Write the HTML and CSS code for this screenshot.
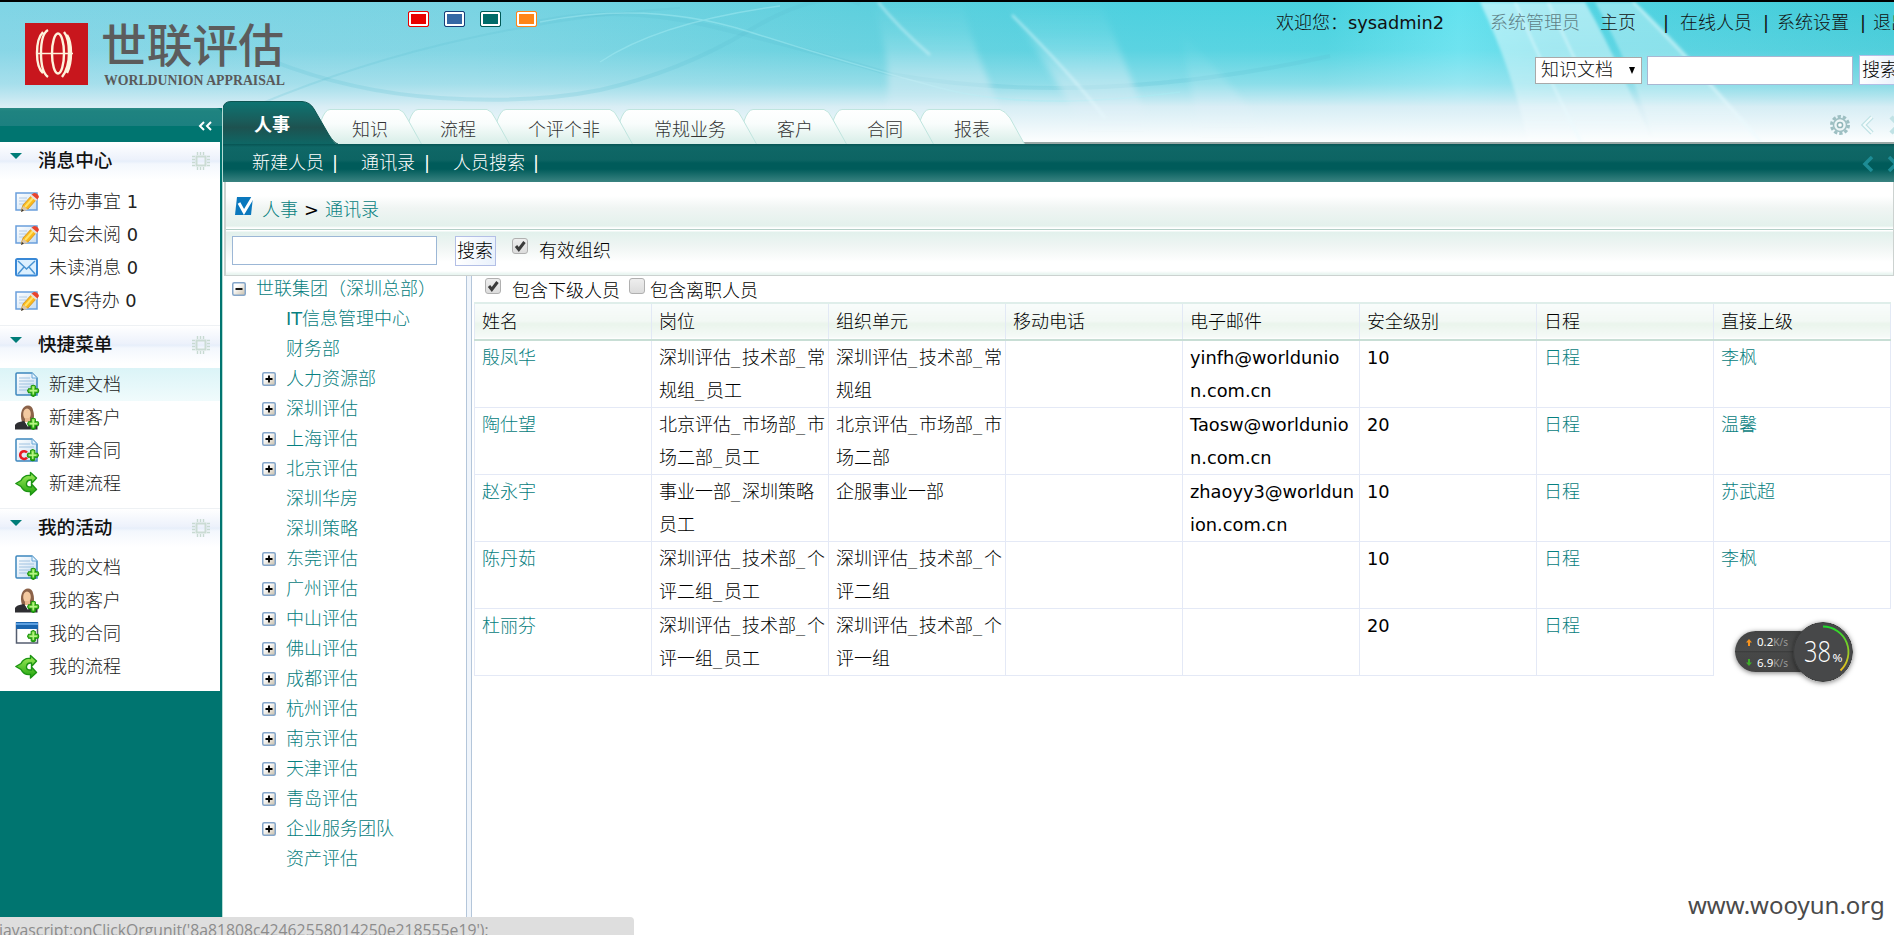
FILE: index.html
```html
<!DOCTYPE html>
<html lang="zh-CN">
<head>
<meta charset="utf-8">
<title>通讯录</title>
<link rel="stylesheet" href="styles.css">
</head>
<body>
<svg class="defs" width="0" height="0" aria-hidden="true">
  <defs>
    <linearGradient id="tabFill" x1="0" y1="0" x2="0" y2="1"><stop offset="0" stop-color="#fff"/><stop offset=".4" stop-color="#f9fdfc"/><stop offset="1" stop-color="#d6ede7"/></linearGradient>
    <linearGradient id="paper" x1="0" y1="0" x2="1" y2="1"><stop offset="0" stop-color="#fff"/><stop offset="1" stop-color="#c4dcf2"/></linearGradient>
    <linearGradient id="green" x1="0" y1="0" x2="0" y2="1"><stop offset="0" stop-color="#a2ee5c"/><stop offset="1" stop-color="#1fa30d"/></linearGradient>
    <linearGradient id="box" x1="0" y1="0" x2="1" y2="1"><stop offset="0.3" stop-color="#fff"/><stop offset="1" stop-color="#c8bda8"/></linearGradient>
    <symbol id="plusBadge" viewBox="0 0 12 12"><path d="M4 1.5 6 .5 8 1.500V4h2.500L11.500 6 10.500 8H8v2.500L6 11.500 4 10.500V8H1.500L.5 6 1.500 4H4z" fill="url(#green)" stroke="#159009"/><path d="M6 2.500v7M2.500 6h7" stroke="#b8f588" stroke-width="1.300"/></symbol>
    <symbol id="i-edit" viewBox="0 0 25 22"><path d="M1 2h21v17H1z" fill="url(#paper)" stroke="#6a9fdc" stroke-width="1.500"/><path d="M4 7h8M4 10h7M4 13h5" stroke="#b4cbe4"/><path d="M6 20 8 14 17 4l5 4-9 10z" fill="#fbb91c" stroke="#c98516" stroke-width=".7"/><path d="M10 16 19 6" stroke="#ffe36b" stroke-width="2"/><path d="m16 4 3-2q4 0 5 4l-2 3z" fill="#e8432c"/><path d="m15 5 6 5 1.500-1.500-6-5z" fill="#e8e2dc"/><path d="m6 21 2-6 5 3.500z" fill="#d9c6ac"/><path d="m6 21 1-3 2 1.500z" fill="#333"/></symbol>
    <symbol id="i-mail" viewBox="0 0 25 22"><rect x="1" y="2" width="21" height="16.500" rx="1.500" fill="#dcf0ff" stroke="#3988d6" stroke-width="2"/><path d="m3 4 8.500 8L20 4M3 17l6-7M20 17l-6-7" fill="none" stroke="#4a94d2" stroke-width="1.500"/></symbol>
    <symbol id="i-doc" viewBox="0 0 25 25"><path d="M2 1h15l5 5v17H2q-1 0-1-1V2q0-1 1-1z" fill="url(#paper)" stroke="#3d86bd" stroke-width="1.500"/><path d="M17 1v5h5" fill="#e8f5ff" stroke="#69a8d8"/><path d="M4 6h11M4 9h15M4 12h15M4 15h12M4 18h9" stroke="#9fc2e0"/><use href="#plusBadge" x="12" y="12.500" width="12.500" height="12.500"/></symbol>
    <symbol id="i-user" viewBox="0 0 25 25"><path d="M7 17Q5 10 7 5q2-4.500 6-4.500T18 5q2 6 0 12z" fill="#8b6249"/><ellipse cx="12" cy="9" rx="3.800" ry="5.500" fill="#f4c9a0"/><path d="M10 13h5v6h-5z" fill="#e9b78d"/><path d="M0 24.500V20q1-3 9-4l4 5 3-5q6 1 6.500 4v4.500z" fill="#2e2e32"/><path d="m10 17 3 5 2-5z" fill="#fff"/><use href="#plusBadge" x="12" y="12.500" width="12.500" height="12.500"/></symbol>
    <symbol id="i-contract" viewBox="0 0 25 25"><path d="M2 1h15l5 5v17H2q-1 0-1-1V2q0-1 1-1z" fill="url(#paper)" stroke="#3d86bd" stroke-width="1.500"/><path d="M17 1v5h5" fill="#e8f5ff" stroke="#69a8d8"/><path d="M4 6h11M4 9h15" stroke="#9fc2e0"/><path d="M12 14.500a3.900 3.900 0 1 0 0 5.200" fill="none" stroke="#e81c24" stroke-width="2.600"/><use href="#plusBadge" x="11.500" y="11" width="12.500" height="12.500"/></symbol>
    <symbol id="i-win" viewBox="0 0 25 25"><path d="M1.500 2h21v20h-21z" fill="#fff" stroke="#555e70" stroke-width="1.500"/><path d="M1 1h22v7H1z" fill="#1b65ae"/><path d="M1 2h22v2H1z" fill="#5c9fe0"/><use href="#plusBadge" x="12" y="9" width="12.500" height="12.500"/></symbol>
    <symbol id="i-flow" viewBox="0 0 25 25"><path d="M.8 12.500 6 9.500Q9 3.500 15.500 4.500V1.500L21.500 7l-5 5.500V9q-4.500-.5-5 3.500t5 3.500V13l5 5.500-6 5.500v-3.500Q9 21.500 6 15.500z" fill="url(#green)" stroke="#1c9412" stroke-width="1.400" stroke-linejoin="round"/></symbol>
    <symbol id="i-chip" viewBox="0 0 18 18"><path d="M4.500 4.500h9v9h-9z" fill="none" stroke="#cbdcd4" stroke-width="2"/><path d="M5.500 0v3M8.500 0v3M11.500 0v3M5.500 15v3M8.500 15v3M11.500 15v3M0 4.500h3M0 7.500h3M0 10.500h3M0 13.500h3M15 4.500h3M15 7.500h3M15 10.500h3M15 13.500h3" stroke="#c8dad2" stroke-width="1.400"/></symbol>
    <symbol id="i-plus" viewBox="0 0 14 14"><rect x=".75" y=".75" width="12.500" height="12.500" rx="1.500" fill="url(#box)" stroke="#84a5c9" stroke-width="1.500"/><path d="M7 3.500v7M3.500 7h7" stroke="#000" stroke-width="1.800"/></symbol>
    <symbol id="i-minus" viewBox="0 0 14 14"><rect x=".75" y=".75" width="12.500" height="12.500" rx="1.500" fill="url(#box)" stroke="#84a5c9" stroke-width="1.500"/><path d="M3.500 7h7" stroke="#000" stroke-width="1.800"/></symbol>
    <symbol id="i-check" viewBox="0 0 16 16"><path d="m4 8 2.800 3.500L12.500 4" fill="none" stroke="#3b3b3b" stroke-width="3"/></symbol>
  </defs>
</svg>

<div class="app">
<svg class="sky" width="1894" height="144" viewBox="0 0 1894 144" aria-hidden="true">
  <defs>
    <linearGradient id="skyH"><stop offset="0" stop-color="#7fd4e5"/><stop offset=".25" stop-color="#78d3e2"/><stop offset=".45" stop-color="#5dcfdd"/><stop offset=".6" stop-color="#4bd0df"/><stop offset=".7" stop-color="#46d2df"/><stop offset=".77" stop-color="#62e2ef"/><stop offset=".82" stop-color="#52d4e3"/><stop offset="1" stop-color="#40cbd8"/></linearGradient>
    <linearGradient id="skyV" x1="0" y1="0" x2="0" y2="1"><stop offset="0" stop-color="#cfeaf3" stop-opacity="0"/><stop offset=".35" stop-color="#cfeaf3" stop-opacity=".12"/><stop offset=".58" stop-color="#cdeaf3" stop-opacity=".5"/><stop offset=".74" stop-color="#deeff6" stop-opacity=".95"/><stop offset=".98" stop-color="#fcfefe"/></linearGradient>
    <linearGradient id="ray" x1="0" y1="0" x2="0" y2="1"><stop offset="0" stop-color="#dff6fb" stop-opacity="0"/><stop offset=".25" stop-color="#dff6fb" stop-opacity=".1"/><stop offset=".65" stop-color="#e6eff7" stop-opacity=".45"/><stop offset="1" stop-color="#e6f2f8" stop-opacity="0"/></linearGradient>
    <linearGradient id="ray2" x1="0" y1="0" x2="0" y2="1"><stop offset="0" stop-color="#e6fbff" stop-opacity=".6"/><stop offset="1" stop-color="#fff" stop-opacity=".2"/></linearGradient>
    <filter id="soft"><feGaussianBlur stdDeviation="1.400"/></filter>
    <filter id="softer"><feGaussianBlur stdDeviation="3"/></filter>
  </defs>
  <rect width="1894" height="144" fill="url(#skyH)"/>
  <rect width="1894" height="144" fill="url(#skyV)"/>
  <g fill="none" stroke="#5bbfd2" stroke-opacity=".22">
    <path d="M255 106Q360 62 470 38T680 8" stroke-width="2"/><path d="M270 60Q350 92 440 98t160-8q80-18 150-60T860 4" stroke-width="4"/>
    <path d="M520 26q90-24 190 0t180 48q200 35 440-18" stroke-width="4"/>
  </g>
  <path d="M600 62q60-40 180-56M540 22q110-22 210 10t190 56 240 4" fill="none" stroke="#a8eef4" stroke-opacity=".45" stroke-width="1.500"/>
  <g filter="url(#softer)">
    <path d="M872 2h90q6 25 16 52l28 70H885q10-60-13-122z" fill="url(#ray)"/>
    <path d="M1005 2h95q12 30 24 58l26 68H1085q-50-80-80-126z" fill="url(#ray)"/>
    <path d="M1180 30l50 55 40 50h-70z" fill="url(#ray)" opacity=".5"/>
  </g>
  <g filter="url(#soft)">
    <path d="M1480 2h105q20 35 38 75l30 65h-125q-15-70-48-140z" fill="url(#ray2)"/>
    <path d="M1635 2q20 18 50 50l80 92h-110q-20-70-60-142z" fill="url(#ray2)" opacity=".7"/>
    <path d="M878 2q20 25 52 53M1012 15q60 60 93 103M1515 2q28 65 66 140M1548 2q28 60 38 80M1633 2l48 50 80 90" fill="none" stroke="#e9fbff" stroke-opacity=".6" stroke-width="2"/>
  </g>
</svg>

<header class="top">
  <svg class="logo" width="290" height="66" viewBox="0 0 290 66" role="img" aria-label="世联评估">
    <path d="M25 1h63v62H25z" fill="#c8161d"/>
    <g fill="none" stroke="#fff3dc" stroke-width="2.400"><ellipse cx="58" cy="31.500" rx="6" ry="20"/><path d="M48 8Q41 12 41 31t7 24M43 10Q37 16 37 31t6 20M64 10q5 6 5 21t-7 24M67 13q4 6 4 18t-4 20"/><path d="M36 31.500h37" stroke-width="1.500"/></g>
    <text x="101" y="40" textLength="183" lengthAdjust="spacingAndGlyphs" class="logo-cn">世联评估</text>
    <text x="104" y="63" textLength="181" lengthAdjust="spacingAndGlyphs" class="logo-en">WORLDUNION APPRAISAL</text>
  </svg>
  <div class="skins"><i class="skin red"></i><i class="skin blue"></i><i class="skin green"></i><i class="skin orange"></i></div>
  <div class="tools">
    <div class="user"><span class="w72">欢迎您：</span><span class="w142 lat">sysadmin2</span><span class="w110 role">系统管理员</span><span class="w63">主页</span><span class="w17 lat">|</span><span class="w82">在线人员</span><span class="w16 lat">|</span><span class="w82">系统设置</span><span class="w15 lat">|</span><span>退出</span></div>
    <div class="find"><div class="select">知识文档<i></i></div><div class="field"></div><div class="btn">搜索</div></div>
  </div>
</header>

<div class="body">
<aside class="side">
  <div class="side-bar"><svg width="14" height="10" viewBox="0 0 14 10"><path d="M6 1 2 5l4 4M13 1 9 5l4 4" fill="none" stroke="#fff" stroke-width="2"/></svg></div>
  <section class="sec"><h3><i></i>消息中心<svg width="18" height="18"><use href="#i-chip"/></svg></h3>
    <a><svg width="25" height="22"><use href="#i-edit"/></svg><span>待办事宜<b class="lat"> 1</b></span></a>
    <a><svg width="25" height="22"><use href="#i-edit"/></svg><span>知会未阅<b class="lat"> 0</b></span></a>
    <a><svg width="25" height="22"><use href="#i-mail"/></svg><span>未读消息<b class="lat"> 0</b></span></a>
    <a><svg width="25" height="22"><use href="#i-edit"/></svg><span><b class="lat">EVS</b>待办<b class="lat"> 0</b></span></a></section>
  <section class="sec"><h3><i></i>快捷菜单<svg width="18" height="18"><use href="#i-chip"/></svg></h3>
    <a class="on"><svg width="25" height="25"><use href="#i-doc"/></svg>新建文档</a>
    <a><svg width="25" height="25"><use href="#i-user"/></svg>新建客户</a>
    <a><svg width="25" height="25"><use href="#i-contract"/></svg>新建合同</a>
    <a><svg width="25" height="25"><use href="#i-flow"/></svg>新建流程</a></section>
  <section class="sec"><h3><i></i>我的活动<svg width="18" height="18"><use href="#i-chip"/></svg></h3>
    <a><svg width="25" height="25"><use href="#i-doc"/></svg>我的文档</a>
    <a><svg width="25" height="25"><use href="#i-user"/></svg>我的客户</a>
    <a><svg width="25" height="25"><use href="#i-win"/></svg>我的合同</a>
    <a><svg width="25" height="25"><use href="#i-flow"/></svg>我的流程</a></section>
</aside>

<main class="main">
  <div class="tabs">
    <div class="tab active"><svg width="116" height="44" viewBox="0 0 116 44"><defs><linearGradient id="act" x1="0" y1="0" x2="0" y2="1"><stop offset="0" stop-color="#0d7472"/><stop offset=".45" stop-color="#1a5c5a"/><stop offset=".6" stop-color="#1d5250"/><stop offset="1" stop-color="#0d6866"/></linearGradient></defs><path d="M0 44V7Q1 .5 8 .5H79Q87 1 91 8L106 34Q111 42 115 44z" fill="url(#act)"/><path d="M0 7Q1 .5 8 .5H79Q87 1 91 8L106 34Q111 42 115 43" fill="none" stroke="#0d5552"/></svg><span>人事</span></div>
    <div class="tab t1"><svg width="102" height="36"><path d="M0 36V12Q4 .5 9 .5H78Q83 2 86 9L101 36z" fill="url(#tabFill)" stroke="#bfe5de"/></svg><span>知识</span></div>
    <div class="tab t2"><svg width="102" height="36"><path d="M0 36V12Q4 .5 9 .5H78Q83 2 86 9L101 36z" fill="url(#tabFill)" stroke="#bfe5de"/></svg><span>流程</span></div>
    <div class="tab t3"><svg width="138" height="36"><path d="M0 36V12Q4 .5 9 .5H113Q118 2 121 9L136 36z" fill="url(#tabFill)" stroke="#bfe5de"/></svg><span>个评个非</span></div>
    <div class="tab t4"><svg width="138" height="36"><path d="M0 36V12Q4 .5 9 .5H114Q119 2 122 9L137 36z" fill="url(#tabFill)" stroke="#bfe5de"/></svg><span>常规业务</span></div>
    <div class="tab t5"><svg width="104" height="36"><path d="M0 36V12Q4 .5 9 .5H80Q85 2 88 9L103 36z" fill="url(#tabFill)" stroke="#bfe5de"/></svg><span>客户</span></div>
    <div class="tab t6"><svg width="102" height="36"><path d="M0 36V12Q4 .5 9 .5H78Q83 2 86 9L101 36z" fill="url(#tabFill)" stroke="#bfe5de"/></svg><span>合同</span></div>
    <div class="tab t7"><svg width="106" height="36"><path d="M0 36V12Q4 .5 9 .5H80Q85 2 90 9L105 36z" fill="url(#tabFill)" stroke="#bfe5de"/></svg><span>报表</span></div>
    <svg class="tab-tools" width="65" height="24" viewBox="0 0 65 24"><circle cx="11" cy="12" r="8.500" fill="none" stroke="#9dbfc2" stroke-width="3" stroke-dasharray="3.300 2.040"/><circle cx="11" cy="12" r="6.500" fill="#edf6f7" stroke="#9dbfc2" stroke-width="1.500"/><circle cx="11" cy="12" r="2.600" fill="#fff" stroke="#8fb5b8" stroke-width="1.500"/><path d="m43 4-8 8 8 8" fill="none" stroke="#c0e2e5" stroke-width="4.500"/><path d="m43 4-8 8 8 8" fill="none" stroke="#f4fcfc" stroke-width="2"/><path d="m62 4 8 8-8 8" fill="none" stroke="#c0e2e5" stroke-width="4.500"/></svg>
  </div>
  <nav class="nav"><span class="n1">新建人员</span><span class="n2 lat">|</span><span class="n3">通讯录</span><span class="n4 lat">|</span><span class="n5">人员搜索</span><span class="lat">|</span>
    <svg width="32" height="16" viewBox="0 0 32 16"><path d="m10 1-7 7 7 7" fill="none" stroke="#1d8c95" stroke-width="3.500"/><path d="m27 1 7 7-7 7" fill="none" stroke="#1d8c95" stroke-width="3.500"/></svg></nav>
  <div class="panel">
    <div class="crumb"><svg width="19" height="20" viewBox="0 0 19 20"><path d="M2 1h16l-2 18H0z" fill="#0a78bd"/><path d="m4 7 5 9L18 1" fill="none" stroke="#fff" stroke-width="3"/></svg><a>人事</a><b class="lat">&gt;</b><a>通讯录</a></div>
    <div class="filter"><div class="input"></div><div class="btn">搜索</div><i class="cb"><svg width="16" height="16"><use href="#i-check"/></svg></i><span>有效组织</span></div>
  </div>
  <div class="work">
    <ul class="tree">
      <li class="root"><svg width="14" height="14"><use href="#i-minus"/></svg>世联集团（深圳总部）</li>
      <li class="leaf"><span><b class="lat">IT</b>信息管理中心</span></li><li class="leaf">财务部</li>
      <li><svg width="14" height="14"><use href="#i-plus"/></svg>人力资源部</li>
      <li><svg width="14" height="14"><use href="#i-plus"/></svg>深圳评估</li>
      <li><svg width="14" height="14"><use href="#i-plus"/></svg>上海评估</li>
      <li><svg width="14" height="14"><use href="#i-plus"/></svg>北京评估</li>
      <li class="leaf">深圳华房</li><li class="leaf">深圳策略</li>
      <li><svg width="14" height="14"><use href="#i-plus"/></svg>东莞评估</li>
      <li><svg width="14" height="14"><use href="#i-plus"/></svg>广州评估</li>
      <li><svg width="14" height="14"><use href="#i-plus"/></svg>中山评估</li>
      <li><svg width="14" height="14"><use href="#i-plus"/></svg>佛山评估</li>
      <li><svg width="14" height="14"><use href="#i-plus"/></svg>成都评估</li>
      <li><svg width="14" height="14"><use href="#i-plus"/></svg>杭州评估</li>
      <li><svg width="14" height="14"><use href="#i-plus"/></svg>南京评估</li>
      <li><svg width="14" height="14"><use href="#i-plus"/></svg>天津评估</li>
      <li><svg width="14" height="14"><use href="#i-plus"/></svg>青岛评估</li>
      <li><svg width="14" height="14"><use href="#i-plus"/></svg>企业服务团队</li>
      <li class="leaf">资产评估</li>
    </ul>
    <div class="split"></div>
    <div class="list">
      <div class="opts"><i class="cb"><svg width="16" height="16"><use href="#i-check"/></svg></i><span class="o1">包含下级人员</span><i class="cb"></i><span class="o2">包含离职人员</span></div>
      <table class="grid">
        <tr><th>姓名</th><th>岗位</th><th>组织单元</th><th>移动电话</th><th>电子邮件</th><th>安全级别</th><th>日程</th><th>直接上级</th></tr>
        <tr><td><a>殷凤华</a></td><td>深圳评估<u>_</u>技术部<u>_</u>常<br>规组<u>_</u>员工</td><td>深圳评估<u>_</u>技术部<u>_</u>常<br>规组</td><td></td><td class="lat">yinfh@worldunio<br>n.com.cn</td><td class="lat">10</td><td><a>日程</a></td><td><a>李枫</a></td></tr>
        <tr><td><a>陶仕望</a></td><td>北京评估<u>_</u>市场部<u>_</u>市<br>场二部<u>_</u>员工</td><td>北京评估<u>_</u>市场部<u>_</u>市<br>场二部</td><td></td><td class="lat">Taosw@worldunio<br>n.com.cn</td><td class="lat">20</td><td><a>日程</a></td><td><a>温馨</a></td></tr>
        <tr><td><a>赵永宇</a></td><td>事业一部<u>_</u>深圳策略<br>员工</td><td>企服事业一部</td><td></td><td class="lat">zhaoyy3@worldun<br>ion.com.cn</td><td class="lat">10</td><td><a>日程</a></td><td><a>苏武超</a></td></tr>
        <tr><td><a>陈丹茹</a></td><td>深圳评估<u>_</u>技术部<u>_</u>个<br>评二组<u>_</u>员工</td><td>深圳评估<u>_</u>技术部<u>_</u>个<br>评二组</td><td></td><td></td><td class="lat">10</td><td><a>日程</a></td><td><a>李枫</a></td></tr>
        <tr><td><a>杜丽芬</a></td><td>深圳评估<u>_</u>技术部<u>_</u>个<br>评一组<u>_</u>员工</td><td>深圳评估<u>_</u>技术部<u>_</u>个<br>评一组</td><td></td><td></td><td class="lat">20</td><td><a>日程</a></td><td class="none"></td></tr>
      </table>
    </div>
  </div>
</main>
</div>

<div class="meter">
  <div class="pill">
    <div><svg width="6" height="7" viewBox="0 0 6 7"><path d="M3 0 6 3.500H4V7H2V3.500H0z" fill="#f7931e"/></svg><b>0.2</b><em>K/s</em></div>
    <div><svg width="6" height="7" viewBox="0 0 6 7"><path d="M3 7 6 3.500H4V0H2v3.500H0z" fill="#3fae29"/></svg><b>6.9</b><em>K/s</em></div>
  </div>
  <svg class="dial" width="60" height="60" viewBox="0 0 60 60"><defs><linearGradient id="arc" x1="0" y1="0" x2="0" y2="1"><stop offset="0" stop-color="#1fdc2c"/><stop offset="1" stop-color="#f0c020"/></linearGradient></defs><circle cx="30" cy="30" r="29.500" fill="#474849" stroke="#3a3b3b"/><path d="M30 4.500A25.500 25.500 0 0 1 47.500 48.500" fill="none" stroke="url(#arc)" stroke-width="1.800"/><text x="11" y="40" textLength="27" lengthAdjust="spacingAndGlyphs" class="num">38</text><text x="39.500" y="40" textLength="10" lengthAdjust="spacingAndGlyphs" class="pct">%</text></svg>
</div>
<div class="mark">www.wooyun.org</div>
<div class="status">javascript:onClickOrgunit('8a81808c42462558014250e218555e19');</div>
</div>
</body>
</html>
```

FILE: styles.css
```css
* { box-sizing: border-box; }
body { margin: 0; background: #fff; font: 300 18px/24px "DejaVu Sans", "Noto Sans CJK SC", sans-serif; color: #111; white-space: nowrap; }
.defs { position: absolute; }
svg { display: block; flex: none; }
i, em, b { font-style: normal; font-weight: inherit; }
u { text-decoration: none; letter-spacing: 2px; }
.lat { font-size: 17.8px; font-weight: 400; }
.app { position: relative; width: 1894px; height: 935px; overflow: hidden; background: #fff; }
.sky { position: absolute; left: 0; top: 0; }

.top { position: relative; height: 101px; border-top: 2px solid #000; display: flex; }
.logo { margin-top: 20px; }
.logo-cn { font: 500 46px "Noto Sans CJK SC", sans-serif; fill: #5c5c5c; }
.logo-en { font: bold 15px "Liberation Serif", serif; fill: #5a5a5a; }
.skins { display: flex; gap: 15px; margin: 9px 0 0 118px; }
.skin { width: 21px; height: 16px; border: 1px solid; border-radius: 2px; box-shadow: inset 0 0 0 2px #fff; }
.red { background: #e80000; border-color: #e80000; }
.blue { background: #3468a4; border-color: #173f78; }
.green { background: #006b68; border-color: #005956; }
.orange { background: #ff8516; border-color: #ff8516; }
.tools { width: 618px; margin-left: auto; flex: none; overflow: hidden; }
.user { display: flex; margin-top: 9px; }
.user span, .nav span { flex: none; }
.role { color: #5e7f86; }
.w15 { width: 13px; } .w16 { width: 14px; } .w17 { width: 17px; }
.w63 { width: 63px; } .w72 { width: 72px; } .w82 { width: 83px; } .w110 { width: 110px; } .w142 { width: 142px; }
.find { display: flex; align-items: center; margin: 20px 0 0 259px; height: 30px; }
.select { width: 107px; height: 27px; flex: none; background: #fff; border: 1px solid #a9a9a9; padding-left: 5px; display: flex; align-items: center; }
.select i { margin-left: 16px; border: 3px solid transparent; border-top: 7px solid #000; border-bottom: 0; }
.field { width: 206px; height: 29px; margin: 0 6px 0 5px; background: #fff; border: 1px solid #a9b7d2; flex: none; }
.btn { border: 1px solid #b3bfe6; background: linear-gradient(90deg, #fff, #e9f1fc); height: 30px; width: 41px; padding: 2px 0 0 2px; flex: none; color: #000; }

.body { display: flex; position: relative; height: 834px; }
.side { width: 223px; flex: none; margin-top: 7px; background: #007570; border-right: 1px solid #b5dcd5; padding-right: 2px; }
.side-bar { height: 34px; margin-right: -2px; background: linear-gradient(#2a8a86, #1f8380 3px, #1c8080 18px, #007570 18px); border-top-right-radius: 6px; padding: 13px 10px 0 0; display: flex; justify-content: flex-end; }
.sec { height: 183px; background: #fff; }
.sec + .sec { border-top: 1px solid #eef1f4; }
.sec h3 { height: 43px; margin: 0; font-weight: 500; font-size: 18.6px; background: linear-gradient(#fff, #ecf1fb 18px, #e6eefa 19px, #f3f7fd 22px, #fff 38px); display: flex; align-items: flex-start; padding: 7px 10px 0 10px; }
.sec + .sec h3 { height: 42px; }
.sec h3 i { border: 6px solid transparent; border-top: 6px solid #007d78; border-bottom: 0; margin: 4px 16px 0 0; }
.sec h3 svg { margin: 3px 0 0 auto; }
.sec a { height: 33px; display: flex; align-items: center; padding-left: 15px; gap: 9px; color: #222; }
.sec a.on { background: linear-gradient(#dbf4f7, #f0fbfc); }

.main { width: 1671px; flex: none; }
.tabs { height: 43px; display: flex; align-items: flex-end; border-bottom: 2px solid #9aa8a6; position: relative; }
.tab { position: relative; height: 33px; flex: none; padding: 9px 0 0 31px; color: #333; }
.tab svg { position: absolute; left: 0; top: 0; }
.tab span { position: relative; }
.active { width: 98px; height: 41px; padding: 12px 0 0 31px; z-index: 9; color: #fff; font-weight: 700; }
.t1 { width: 88px; z-index: 8; } .t2 { width: 88px; z-index: 7; } .t3 { width: 123px; z-index: 6; } .t4 { width: 124px; z-index: 5; padding-left: 34px; }
.t5 { width: 89px; z-index: 4; padding-left: 33px; } .t6 { width: 87px; z-index: 3; padding-left: 34px; } .t7 { width: 104px; z-index: 2; padding-left: 34px; }
.tab-tools { margin: 0 0 5px auto; }
.nav { position: relative; z-index: 10; height: 38px; padding: 7px 0 0 29px; display: flex; color: #fff; background: linear-gradient(#075453, #0f6766 3px, #0d6463 16px, #005b5a 19px, #005b5a 25px, #3a8381 38px); }
.n1 { width: 80px; } .n2 { width: 29px; } .n3 { width: 63px; } .n4 { width: 29px; } .n5 { width: 80px; }
.nav svg { margin: 5px 0 0 auto; }
.panel { height: 94px; margin-left: 1px; border: 1px solid #ccd2d0; border-width: 0 1px 1px 2px; }
.crumb { height: 48px; border-bottom: 1px solid #b3cfc7; background: linear-gradient(#fff 14px, #f0f5f3 26px, #e3f1ec 44px, #fff 46px); display: flex; padding: 14px 0 0 9px; }
.crumb a, .grid a { color: #078080; }
.crumb a, .crumb b { padding-top: 2px; }
.crumb svg { margin-right: 8px; }
.crumb b { margin: 0 6px; color: #000; }
.filter { height: 45px; background: linear-gradient(#fff 1px, #e2f1ec 2px, #eff5f3 16px, #fff 32px, #fff 41px, #e9f5f1 44px); display: flex; padding: 6px 0 0 6px; color: #000; }
.input { width: 205px; height: 29px; background: #fff; border: 1px solid #9cb7d6; }
.filter .btn { margin-left: 18px; padding-left: 1px; }
.cb { width: 16px; height: 16px; flex: none; border: 1px solid #b0b0b0; border-radius: 3px; background: linear-gradient(#eee, #dcdcdc); }
.cb svg { margin: -1px; }
.filter .cb { margin: 2px 11px 0 16px; }
.filter span { padding-top: 3px; }
.work { display: flex; height: 659px; }
.tree { width: 243px; flex: none; margin: 0; padding: 0 0 0 9px; list-style: none; color: #078080; }
.tree li { height: 30px; padding: 0 0 0 30px; display: flex; align-items: center; gap: 10px; }
.tree li.root { padding-left: 0; height: 26px; margin-bottom: 2px; }
.tree li.leaf { padding-left: 54px; }
.split { width: 6px; flex: none; background: #f0f5fb; border: 1px solid #b4c6da; border-width: 0 1px; }
.list { padding-left: 2px; }
.opts { height: 26px; display: flex; padding: 2px 0 0 11px; color: #000; }
.opts span { padding-top: 1px; }
.opts .o1 { width: 117px; margin-left: 11px; }
.opts .o2 { margin-left: 5px; }
.grid { width: 1417px; table-layout: fixed; border-collapse: collapse; color: #000; }
.grid th { height: 37px; font-weight: inherit; text-align: left; padding: 0 0 0 7px; border: 1px solid #e2e9f5; border-top: 2px solid #dfeeea; border-bottom: 2px solid #c8ded5; background: linear-gradient(#f8fcfb, #f2f8f4 17px, #eaf4ec 20px, #f5faf7 33px, #fff); }
.grid td { height: 67px; line-height: 33px; padding: 0 0 0 7px; vertical-align: top; border: 1px solid #e4e9f6; }
.grid td.none { border-right-color: transparent; border-bottom-color: transparent; }

.meter { position: absolute; left: 1735px; top: 622px; width: 120px; height: 60px; }
.pill { position: absolute; top: 9px; left: 0; width: 85px; height: 41px; border-radius: 21px; background: linear-gradient(#434444, #4b4c4c 20px, #3a3b3b 20px, #474848 22px, #444); box-shadow: 0 1px 5px rgba(0,0,0,.5); padding: 1px 0 0 11px; font: 11.500px/20px "Noto Sans", sans-serif; color: #fff; }
.pill div { display: flex; align-items: center; height: 20.500px; }
.pill b { margin-left: 5px; }
.pill em { color: #999; font-size: 10px; }
.dial { position: absolute; left: 58px; top: 0; border-radius: 50%; box-shadow: 0 1px 5px rgba(0,0,0,.5); }
.num { font: 300 29px "Open Sans", "Noto Sans", sans-serif; fill: #fff; }
.pct { font: 11px "Noto Sans", sans-serif; fill: #fff; }
.mark { position: absolute; left: 1688px; top: 888px; font: 24px/34px "Noto Sans", sans-serif; color: #4a4a4a; }
.status { position: absolute; left: 0; top: 917px; width: 634px; height: 18px; overflow: hidden; background: #dedede; border-top-right-radius: 4px; font: 15.750px/27px "Open Sans", sans-serif; color: #8c8c8c; text-indent: -1px; }
```
